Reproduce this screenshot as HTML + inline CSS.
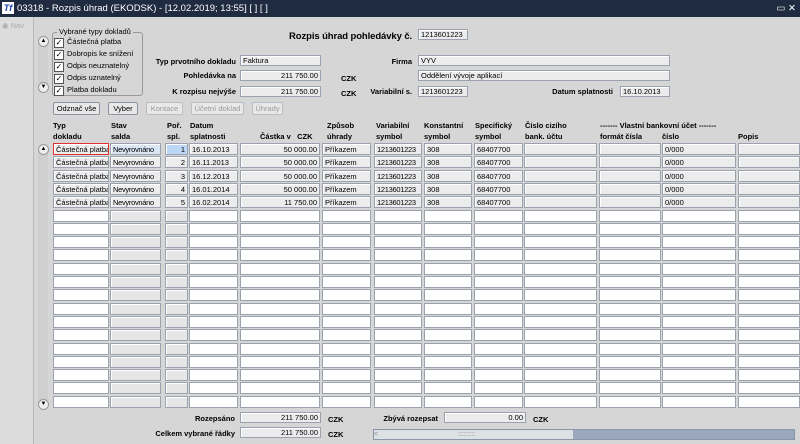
<!DOCTYPE html>
<html><head><meta charset="utf-8"><style>
body{margin:0;width:800px;height:444px;overflow:hidden;background:#d6d6d6;font-family:"Liberation Sans",sans-serif;font-size:7.5px;color:#000;position:relative}
.a{position:absolute}
.t{position:absolute;height:17px;left:0;top:0;width:800px;background:#1f2b40;color:#fff;font-size:9.5px;line-height:17px}
.f{position:absolute;background:#ececec;border:1px solid #9aa3ad;box-shadow:inset 1px 1px 0 #fff;height:11px;line-height:10px;font-size:7.5px;padding:0 2px;box-sizing:border-box;white-space:nowrap;overflow:hidden}
.b{font-weight:bold}
.r{text-align:right}
.btn{position:absolute;top:102px;height:13px;line-height:12px;border:1px solid #8c96a0;background:#e8e8e8;font-size:7.5px;text-align:center;box-sizing:border-box;border-radius:2px}
.dis{color:#9a9a9a;border-color:#b8bec4}
.h{position:absolute;font-weight:bold;font-size:7.5px;line-height:11px;white-space:nowrap}
.hr{position:absolute;font-weight:bold;font-size:7.5px;line-height:11px;white-space:nowrap;text-align:right}
.cb{display:inline-block;width:8px;height:8px;border:1px solid #555;background:#fff;vertical-align:-1px;margin-right:3px;font-size:8px;line-height:7px;text-align:center}
</style></head><body>
<div class="t"><span style="display:inline-block;width:12px;height:12px;background:#fff;color:#1a3fb0;font-weight:bold;font-style:italic;font-size:9px;line-height:12px;text-align:center;margin:2px 3px 0 2px;vertical-align:top">Tf</span>03318 - Rozpis úhrad (EKODSK) - [12.02.2019; 13:55] [ ] [ ]<span style="position:absolute;right:4px;top:0">▭ ✕</span></div>
<div class="a" style="left:0;top:17px;width:33px;height:427px;background:#dcdcdc;border-right:1px solid #b9b9b9"></div>
<div class="a" style="left:2px;top:21px;width:30px;height:10px;color:#aaa;font-size:7.5px">◉ Nav</div>
<div class="a" style="left:52px;top:32px;width:89px;height:62px;border:1px solid #999;border-radius:3px"></div>
<div class="a" style="left:57px;top:27px;background:#d6d6d6;padding:0 2px;font-size:7.5px">Vybrané typy dokladů</div>
<div class="a" style="left:54px;top:36px;line-height:11.5px;font-size:7.5px">
<div><span class="cb">✓</span>Částečná platba</div><div><span class="cb">✓</span>Dobropis ke snížení</div><div><span class="cb">✓</span>Odpis neuznatelný</div><div><span class="cb">✓</span>Odpis uznatelný</div><div><span class="cb">✓</span>Platba dokladu</div></div>
<div class="a" style="left:38px;top:36px;width:10px;height:55px;background:#cfcfcf;border-radius:5px"></div>
<div class="a" style="left:38px;top:36px;width:9px;height:9px;border:1px solid #999;border-radius:50%;background:#eee;font-size:6px;text-align:center;line-height:9px">▲</div>
<div class="a" style="left:38px;top:82px;width:9px;height:9px;border:1px solid #999;border-radius:50%;background:#eee;font-size:6px;text-align:center;line-height:9px">▼</div>
<div class="a b" style="left:289px;top:31px;font-size:9.5px;letter-spacing:-0.1px">Rozpis úhrad pohledávky č.</div>
<div class="f" style="left:418px;top:29px;width:50px">1213601223</div>
<div class="hr" style="right:564px;top:56px">Typ prvotního dokladu</div>
<div class="f" style="left:240px;top:55px;width:81px">Faktura</div>
<div class="hr" style="right:564px;top:70px">Pohledávka na</div>
<div class="f r" style="left:240px;top:70px;width:81px">211 750.00</div>
<div class="h" style="left:341px;top:73px">CZK</div>
<div class="hr" style="right:564px;top:86px">K rozpisu nejvýše</div>
<div class="f r" style="left:240px;top:86px;width:81px">211 750.00</div>
<div class="h" style="left:341px;top:88px">CZK</div>
<div class="hr" style="right:388px;top:56px">Firma</div>
<div class="f" style="left:418px;top:55px;width:252px">VYV</div>
<div class="f" style="left:418px;top:70px;width:252px">Oddělení vývoje aplikací</div>
<div class="hr" style="right:388px;top:86px">Variabilní s.</div>
<div class="f" style="left:418px;top:86px;width:50px">1213601223</div>
<div class="hr" style="right:187px;top:86px">Datum splatnosti</div>
<div class="f" style="left:620px;top:86px;width:50px">16.10.2013</div>
<div class="btn" style="left:53px;width:47px">Odznač vše</div>
<div class="btn" style="left:108px;width:30px">Vyber</div>
<div class="btn dis" style="left:146px;width:37px">Kontace</div>
<div class="btn dis" style="left:191px;width:53px">Účetní doklad</div>
<div class="btn dis" style="left:252px;width:31px">Úhrady</div>
<div class="h" style="left:53px;top:120px">Typ<br>dokladu</div>
<div class="h" style="left:111px;top:120px">Stav<br>salda</div>
<div class="h" style="left:167px;top:120px">Poř.<br>spl.</div>
<div class="h" style="left:190px;top:120px">Datum<br>splatnosti</div>
<div class="h" style="left:260px;top:131px">Částka v &nbsp; CZK</div>
<div class="h" style="left:327px;top:120px">Způsob<br>úhrady</div>
<div class="h" style="left:376px;top:120px">Variabilní<br>symbol</div>
<div class="h" style="left:424px;top:120px">Konstantní<br>symbol</div>
<div class="h" style="left:475px;top:120px">Specifický<br>symbol</div>
<div class="h" style="left:525px;top:120px">Číslo cizího<br>bank. účtu</div>
<div class="h" style="left:600px;top:120px">------- Vlastní bankovní účet -------</div>
<div class="h" style="left:600px;top:131px">formát čísla</div>
<div class="h" style="left:662px;top:131px">číslo</div>
<div class="h" style="left:738px;top:131px">Popis</div>
<div class="a" style="left:38px;top:144px;width:10px;height:265px;background:#cfcfcf;border-radius:5px"></div>
<div class="a" style="left:38px;top:144px;width:9px;height:9px;border:1px solid #999;border-radius:50%;background:#eee;font-size:6px;text-align:center;line-height:9px">▲</div>
<div class="a" style="left:38px;top:399px;width:9px;height:9px;border:1px solid #999;border-radius:50%;background:#eee;font-size:6px;text-align:center;line-height:9px">▼</div>
<div id="g"></div>
<div class="hr" style="right:565px;top:413px">Rozepsáno</div>
<div class="f r" style="left:240px;top:412px;width:81px">211 750.00</div>
<div class="h" style="left:328px;top:414px">CZK</div>
<div class="hr" style="right:565px;top:428px">Celkem vybrané řádky</div>
<div class="f r" style="left:240px;top:427px;width:81px">211 750.00</div>
<div class="h" style="left:328px;top:429px">CZK</div>
<div class="hr" style="right:362px;top:413px">Zbývá rozepsat</div>
<div class="f r" style="left:444px;top:412px;width:82px">0.00</div>
<div class="h" style="left:533px;top:414px">CZK</div>
<div class="a" style="left:373px;top:429px;width:422px;height:11px;background:#99a8bd;border:1px solid #8a96a8;box-sizing:border-box"></div>
<div class="a" style="left:374px;top:430px;width:199px;height:9px;background:#dde0e4;color:#888;font-size:7px;line-height:9px">&lt;<span style="margin-left:80px">:::::::::</span></div>
<script>
var cols=[[53,56],[110,51],[165,23],[189,49],[240,80],[322,49],[374,48],[424,48],[474,49],[524,73],[599,62],[662,74],[738,62]];
var data=[["Částečná platba","Nevyrovnáno","1","16.10.2013","50 000.00","Příkazem","1213601223","308","68407700","","","0/000",""],
["Částečná platba","Nevyrovnáno","2","16.11.2013","50 000.00","Příkazem","1213601223","308","68407700","","","0/000",""],
["Částečná platba","Nevyrovnáno","3","16.12.2013","50 000.00","Příkazem","1213601223","308","68407700","","","0/000",""],
["Částečná platba","Nevyrovnáno","4","16.01.2014","50 000.00","Příkazem","1213601223","308","68407700","","","0/000",""],
["Částečná platba","Nevyrovnáno","5","16.02.2014","11 750.00","Příkazem","1213601223","308","68407700","","","0/000",""]];
var h="";
for(var r=0;r<20;r++){var y=143+r*13.3;
for(var c=0;c<13;c++){var d=data[r];var txt=d?d[c]:"";
var bg=d?"#ececec":"#fff";if(!d&&(c==1||c==2))bg="#e6e6e6";
if(d&&c==1&&r==0)bg="#dbe6f4";if(d&&c==2&&r==0)bg="#bcd6f5";
var al=(c==2||c==4)?"text-align:right;":"";
var bd=(r==0&&c==0)?"border:1px solid #e03030;":"";
var ls=(c==1||c==6)?"letter-spacing:-0.3px;":"";
h+='<div class="f" style="left:'+cols[c][0]+'px;top:'+y+'px;width:'+cols[c][1]+'px;height:12px;line-height:11px;background:'+bg+';'+al+bd+ls+'">'+txt+'</div>';}}
document.getElementById("g").innerHTML=h;
</script>
</body></html>
